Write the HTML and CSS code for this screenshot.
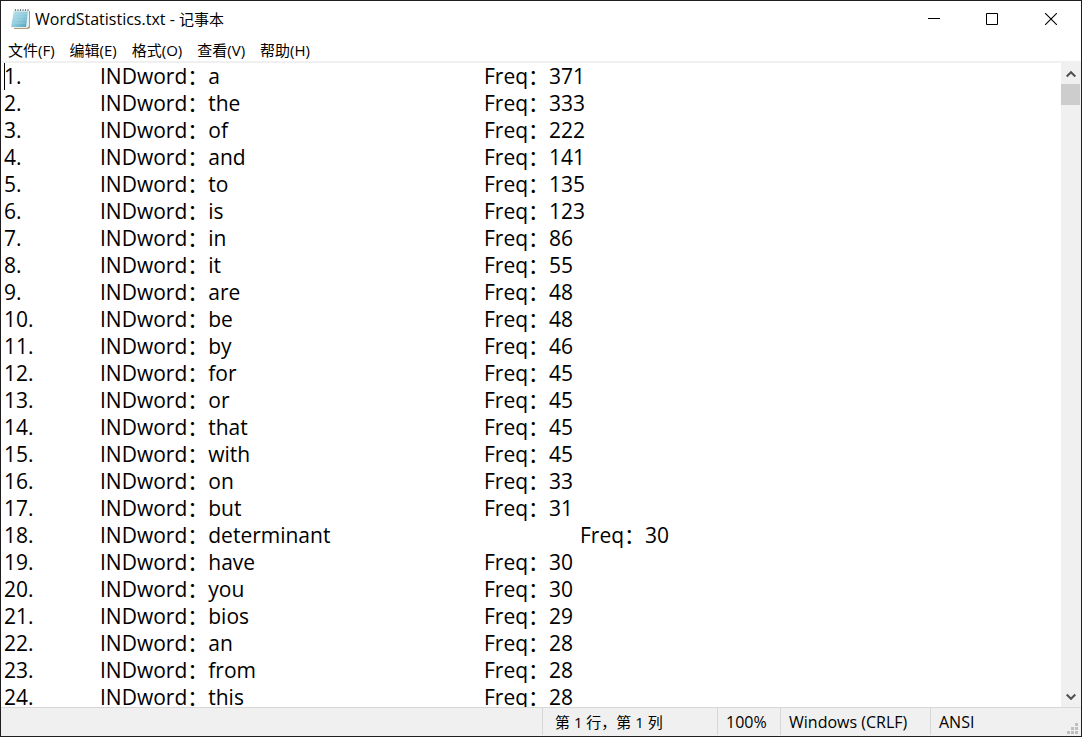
FILE: index.html
```
<!DOCTYPE html>
<html lang="zh-CN">
<head>
<meta charset="utf-8">
<title>WordStatistics.txt - 记事本</title>
<link rel="stylesheet" href="styles.css">
</head>
<body>
<div class="window">
  <header class="titlebar">
    <svg class="app-icon" width="22" height="22" viewBox="0 0 22 22" aria-hidden="true">
      <defs><linearGradient id="paper" x1="0" y1="0" x2="1" y2="1"><stop offset="0" stop-color="#c4e5ee"/><stop offset=".5" stop-color="#91cddd"/><stop offset="1" stop-color="#4f9fba"/></linearGradient></defs>
      <path d="M5 3h15v17l-2 1H4z" fill="#b59c76"/>
      <path d="M5 2h14v16l-2 2H3z" fill="#e7eff0"/>
      <path d="M4 2h14l-2 17H1z" fill="url(#paper)"/>
      <path d="M4 6h13M3.700 9h13M3 12h13M2.500 15h13" stroke="#add9e5" stroke-width="1" opacity=".6"/>
      <path d="M4 2h15v2H4z" fill="#d6e3e6"/>
      <path d="M5.500 1v2M8 1v2M10.500 1v2M13 1v2M15.500 1v2M18 1v2" stroke="#71838a" stroke-width="1"/>
    </svg>
    <h1 class="title">WordStatistics.txt - <span class="app-name">记事本</span></h1>
    <div class="controls">
      <button class="control" type="button" aria-label="最小化"><svg width="12" height="12" viewBox="0 0 12 12"><path d="M0 5.500h12" stroke="#000"/></svg></button>
      <button class="control" type="button" aria-label="最大化"><svg width="12" height="12" viewBox="0 0 12 12"><path d="M.5.5h11v11H.5z" fill="none" stroke="#000"/></svg></button>
      <button class="control" type="button" aria-label="关闭"><svg width="12" height="12" viewBox="0 0 12 12"><path d="M0 0l12 12M12 0L0 12" stroke="#000" stroke-width="1.100"/></svg></button>
    </div>
  </header>
  <nav class="menubar">
    <button class="menu" type="button">文件(F)</button>
    <button class="menu" type="button">编辑(E)</button>
    <button class="menu" type="button">格式(O)</button>
    <button class="menu" type="button">查看(V)</button>
    <button class="menu" type="button">帮助(H)</button>
  </nav>
  <main class="editor">
    <span class="caret"></span>
    <textarea class="text" aria-label="文本编辑器" wrap="off" spellcheck="false">
1.	INDword&#xFF1A;a			Freq&#xFF1A;371
2.	INDword&#xFF1A;the			Freq&#xFF1A;333
3.	INDword&#xFF1A;of			Freq&#xFF1A;222
4.	INDword&#xFF1A;and			Freq&#xFF1A;141
5.	INDword&#xFF1A;to			Freq&#xFF1A;135
6.	INDword&#xFF1A;is			Freq&#xFF1A;123
7.	INDword&#xFF1A;in			Freq&#xFF1A;86
8.	INDword&#xFF1A;it			Freq&#xFF1A;55
9.	INDword&#xFF1A;are			Freq&#xFF1A;48
10.	INDword&#xFF1A;be			Freq&#xFF1A;48
11.	INDword&#xFF1A;by			Freq&#xFF1A;46
12.	INDword&#xFF1A;for			Freq&#xFF1A;45
13.	INDword&#xFF1A;or			Freq&#xFF1A;45
14.	INDword&#xFF1A;that			Freq&#xFF1A;45
15.	INDword&#xFF1A;with			Freq&#xFF1A;45
16.	INDword&#xFF1A;on			Freq&#xFF1A;33
17.	INDword&#xFF1A;but			Freq&#xFF1A;31
18.	INDword&#xFF1A;determinant			Freq&#xFF1A;30
19.	INDword&#xFF1A;have			Freq&#xFF1A;30
20.	INDword&#xFF1A;you			Freq&#xFF1A;30
21.	INDword&#xFF1A;bios			Freq&#xFF1A;29
22.	INDword&#xFF1A;an			Freq&#xFF1A;28
23.	INDword&#xFF1A;from			Freq&#xFF1A;28
24.	INDword&#xFF1A;this			Freq&#xFF1A;28</textarea>
    <div class="scrollbar">
      <button class="scroll-button" type="button" aria-label="向上滚动"><svg width="10" height="8" viewBox="0 0 10 8"><path d="M.7 6.500L5 2.200l4.300 4.300" fill="none" stroke="#505050" stroke-width="2"/></svg></button>
      <div class="thumb"></div>
      <button class="scroll-button down" type="button" aria-label="向下滚动"><svg width="10" height="8" viewBox="0 0 10 8"><path d="M.7 1.500L5 5.800l4.300-4.300" fill="none" stroke="#505050" stroke-width="2"/></svg></button>
    </div>
  </main>
  <footer class="statusbar">
    <span class="cell position">第 1 行&#xFF0C;第 1 列</span>
    <span class="cell zoom">100%</span>
    <span class="cell ending">Windows (CRLF)</span>
    <span class="cell encoding">ANSI</span>
    <svg class="grip" width="11" height="11" viewBox="0 0 11 11" aria-hidden="true"><path d="M8 0h3v3H8zM4 4h3v3H4zM8 4h3v3H8zM0 8h3v3H0zM4 8h3v3H4zM8 8h3v3H8z" fill="#bfbfbf"/></svg>
  </footer>
</div>
</body>
</html>
```
FILE: styles.css
```
* {
  box-sizing: border-box;
}

body {
  margin: 0;
  color: #000;
  font-family: "Open Sans", "Noto Sans CJK SC", sans-serif;
}

button {
  border: 0;
  padding: 0;
  background: transparent;
  color: inherit;
  font: inherit;
}

.window {
  display: flex;
  flex-direction: column;
  height: 100vh;
  border: 1px solid #1f1d20;
  background: #fff;
}

.titlebar {
  display: flex;
  align-items: center;
  height: 36px;
  padding-left: 9px;
}

.app-icon {
  flex: none;
}

.title {
  flex: 1;
  margin: 0 0 0 3px;
  font-size: 16px;
  font-weight: 400;
  line-height: 20px;
  white-space: nowrap;
}

.app-name {
  font-size: 15px;
}

.controls {
  display: flex;
  align-self: stretch;
}

.control {
  display: flex;
  align-items: center;
  justify-content: center;
  width: 58px;
}

.control:last-child {
  width: 60px;
}

.menubar {
  display: flex;
  align-items: flex-end;
  gap: 15px;
  height: 26px;
  padding: 0 7px;
  border-bottom: 2px solid #f0f0f0;
}

.menu {
  font-size: 15px;
  line-height: 21px;
  white-space: nowrap;
}

.editor {
  position: relative;
  display: flex;
  flex: 1;
  min-height: 0;
}

.caret {
  position: absolute;
  top: 0;
  left: 3px;
  width: 1px;
  height: 27px;
  background: #000;
}

.text {
  flex: 1;
  min-width: 0;
  margin: 0;
  border: 0;
  padding: 0 0 0 3px;
  outline: 0;
  background: transparent;
  color: #000;
  font-family: "Open Sans", "Noto Sans CJK SC", sans-serif;
  font-size: 21px;
  line-height: 27px;
  white-space: pre;
  tab-size: 96px;
  resize: none;
  overflow: hidden;
}

.scrollbar {
  display: flex;
  flex-direction: column;
  width: 20px;
  background: #f0f0f0;
}

.scroll-button {
  display: flex;
  align-items: center;
  justify-content: center;
  height: 21px;
}

.thumb {
  width: 19px;
  height: 21px;
  background: #cdcdcd;
}

.down {
  margin-top: auto;
}

.statusbar {
  position: relative;
  display: flex;
  justify-content: flex-end;
  height: 29px;
  border-top: 1px solid #d7d7d7;
  background: #f0f0f0;
  font-size: 16px;
  line-height: 28px;
}

.cell {
  height: 27px;
  padding-left: 8px;
  border-left: 1px solid #d7d7d7;
  white-space: nowrap;
}

.position {
  width: 175px;
  padding-left: 12px;
  font-size: 15px;
}

.zoom {
  width: 63px;
}

.ending {
  width: 150px;
}

.encoding {
  width: 151px;
}

.grip {
  position: absolute;
  right: 3px;
  bottom: 2px;
}
```
